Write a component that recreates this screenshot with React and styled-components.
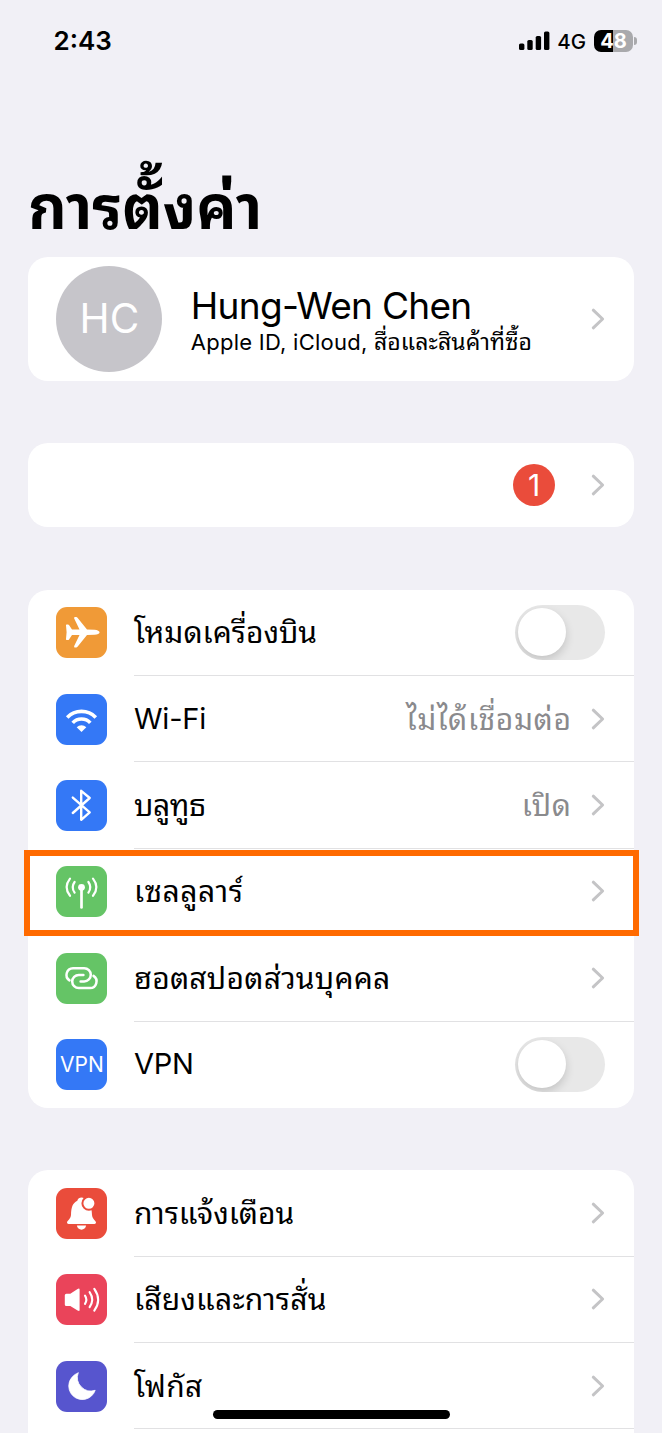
import React from "react";
import styled, { createGlobalStyle } from "styled-components";

const Global = createGlobalStyle`
  * { box-sizing: border-box; }
  body { margin: 0; background: #f1f0f6; }
`;

const sans = `Inter, "Noto Sans Thai Looped", Loma, "Noto Sans Thai", "Noto Sans", sans-serif`;

const Screen = styled.main`
  width: 662px;
  height: 1433px;
  position: relative;
  overflow: hidden;
  padding: 0 28.5px 0 28px;
  background: #f1f0f6;
  color: #000;
  font-family: ${sans};
  display: flex;
  flex-direction: column;
`;

const StatusBar = styled.header`
  flex: none;
  height: 81.5px;
  display: flex;
  align-items: center;
  justify-content: space-between;
  padding-left: 25.5px;
`;

const Clock = styled.span`
  padding-bottom: 1px;
  font-size: 26px;
  font-weight: 600;
`;

const StatusIcons = styled.div`
  display: flex;
  align-items: center;
  margin-right: -3px;
`;

const Network = styled.span`
  margin: 1px 8px 0 7px;
  font-size: 20.5px;
  font-weight: 500;
`;

const Battery = styled.div`
  width: 39px;
  height: 22px;
  border-radius: 7px;
  display: flex;
  align-items: center;
  justify-content: center;
  background: linear-gradient(90deg, #000 49%, #a9a9ac 49%);
  color: #fff;
  font-size: 20px;
  font-weight: 700;
`;

const BatteryCap = styled.div`
  width: 2.5px;
  height: 8px;
  margin-left: 1px;
  border-radius: 0 3px 3px 0;
  background: #a9a9ac;
`;

const Title = styled.h1`
  flex: none;
  height: 175.5px;
  margin: 0;
  padding-top: 85.5px;
  font-size: 60px;
  line-height: 80px;
  font-weight: 700;
  white-space: nowrap;
`;

const Card = styled.section`
  flex: none;
  margin-bottom: 62.3px;
  border-radius: 20px;
  background: #fff;
  ${(p) => p.$continues && "height: 330px;"}
`;

const Profile = styled.div`
  height: 123.7px;
  display: flex;
  align-items: center;
  padding: 0 28.5px 0 28.4px;
`;

const Avatar = styled.div`
  width: 106px;
  height: 106px;
  margin-right: 28.4px;
  border-radius: 50%;
  display: flex;
  align-items: center;
  justify-content: center;
  background: #c6c5ca;
  color: #fff;
  font-size: 40.5px;
`;

const Identity = styled.div`
  flex: 1;
  padding-top: 5px;
  white-space: nowrap;
`;

const Name = styled.div`
  font-size: 37px;
  line-height: 42px;
  letter-spacing: -0.7px;
`;

const Detail = styled.div`
  font-size: 22px;
  line-height: 30px;
  letter-spacing: 0.25px;
`;

const ThaiText = styled.span`
  font-size: 23px;
  letter-spacing: 0.1px;
`;

const Row = styled.div`
  height: 86.4px;
  position: relative;
  display: flex;
  align-items: center;
  padding-left: 28.4px;
`;

const RowBody = styled.div`
  flex: 1;
  align-self: stretch;
  margin-left: 26.6px;
  padding-right: 28.5px;
  display: flex;
  align-items: center;
  border-bottom: 1.5px solid ${(p) => (p.$divider ? "#e1e1e3" : "transparent")};
`;

const Label = styled.span`
  flex: 1;
  font-size: ${(p) => (p.$latin ? 29 : 30)}px;
  line-height: 50px;
  letter-spacing: ${(p) => p.$track || 0}px;
  white-space: nowrap;
`;

const Value = styled(Label)`
  flex: none;
  margin-right: 19.5px;
  letter-spacing: 0.6px;
  color: #8a8a8d;
`;

const Highlight = styled.div`
  position: absolute;
  z-index: 1;
  top: 1px;
  left: -4px;
  right: -5.5px;
  height: 86px;
  border: 6px solid #ff6a00;
`;

const Tile = styled.div`
  width: 51px;
  height: 51px;
  border-radius: 11px;
  display: flex;
  align-items: center;
  justify-content: center;
  background: ${(p) => p.$color};
  color: #fff;
  font-size: 21px;
`;

const Track = styled.div`
  width: 90px;
  height: 55px;
  padding: 3.5px 3px;
  border-radius: 28px;
  overflow: hidden;
  background: #e8e8e8;
`;

const Knob = styled.div`
  width: 48px;
  height: 48px;
  border-radius: 50%;
  background: #fff;
  box-shadow: 0 4px 10px rgba(0, 0, 0, 0.16);
`;

const NoticeRow = styled.div`
  height: 84.3px;
  display: flex;
  align-items: center;
  justify-content: flex-end;
  padding-right: 28.5px;
`;

const Count = styled.span`
  width: 42px;
  height: 42px;
  margin-right: 36px;
  border-radius: 50%;
  display: flex;
  align-items: center;
  justify-content: center;
  background: #ea4c3b;
  color: #fff;
  font-size: 30px;
`;

const HomeBar = styled.div`
  position: absolute;
  z-index: 2;
  left: 213px;
  bottom: 14px;
  width: 237px;
  height: 9px;
  border-radius: 5px;
  background: #000;
`;

const Glyph = ({ children }) => (
  <svg width="51" height="51" viewBox="0 0 51 51" fill="none" strokeLinecap="round" strokeLinejoin="round">
    {children}
  </svg>
);

const Chevron = () => (
  <svg width="14" height="24" viewBox="0 0 14 24" fill="none">
    <path d="M2.3 3.2 L11.6 12 L2.3 20.8" stroke="#c4c4c6" strokeWidth="3" strokeLinecap="round" strokeLinejoin="round" />
  </svg>
);

const Signal = () => (
  <svg width="31" height="20" viewBox="0 0 31 20" fill="#000">
    <rect x="0" y="12.5" width="5.4" height="6.5" rx="1.6" />
    <rect x="8.3" y="9" width="5.4" height="10" rx="1.6" />
    <rect x="16.7" y="5" width="5.4" height="14" rx="1.6" />
    <rect x="25" y="0.5" width="5.4" height="18.5" rx="1.6" />
  </svg>
);

const Toggle = () => (
  <Track>
    <Knob />
  </Track>
);

const glyphs = {
  plane: (
    <Glyph>
      <path
        fill="#fff"
        d="M10.6 17.5H12Q12.6 17.5 13 18L16 22.6H23.5L18.2 11.6Q17.6 10.1 19 10.1H20.2Q21 10.1 21.5 10.8L31 22.4L38.5 22.7C41.5 22.9 43.6 24 43.6 25.2S41.5 27.6 38.5 27.8L31 28.1L21.5 39.7Q21 40.4 20.2 40.4H19Q17.6 40.4 18.2 38.9L23.5 27.9H16L13 32.5Q12.6 33 12 33H10.6Q10 33 10 32.2L10.6 25.2L10 18.3Q10 17.5 10.6 17.5Z"
      />
    </Glyph>
  ),
  wifi: (
    <Glyph>
      <g stroke="#fff" strokeWidth="3.6" strokeLinecap="butt">
        <path d="M11.2 23.4A20 20 0 0 1 39.8 23.4" />
        <path d="M16.7 28.9A12 12 0 0 1 34.3 28.9" />
      </g>
      <path fill="#fff" d="M20.7 33.2A6.8 6.8 0 0 1 30.3 33.2L25.5 38Z" />
    </Glyph>
  ),
  bluetooth: (
    <Glyph>
      <path stroke="#fff" strokeWidth="2.4" d="M16.8 17.6L33.7 32.4L25.2 39.8V10.8L33.7 18L16.8 33" />
    </Glyph>
  ),
  cellular: (
    <Glyph>
      <circle cx="25.5" cy="21.3" r="3.4" fill="#fff" />
      <g stroke="#fff" strokeWidth="2.2">
        <path strokeWidth="2.7" d="M25.5 22V41.4" />
        <path d="M18.6 16Q14.8 21.3 18.6 26.7M32.4 16Q36.2 21.3 32.4 26.7" />
        <path d="M14 12.6Q7.2 21.3 14 29.8M37 12.6Q43.8 21.3 37 29.8" />
      </g>
    </Glyph>
  ),
  hotspot: (
    <Glyph>
      <g stroke="#fff" strokeWidth="2.5">
        <path d="M13.5 27.4A6.65 6.65 0 0 1 17 15.2H28.2A6.6 6.6 0 0 1 28.2 28.4H24.6" />
        <path d="M37.5 22.9A6.65 6.65 0 0 1 34 35.1H22.8A6.6 6.6 0 0 1 22.8 21.9H27.4" />
      </g>
    </Glyph>
  ),
  bell: (
    <Glyph>
      <path
        fill="#fff"
        d="M11 34.6C11 32.5 14.6 31.4 15 27C15.3 19 16.5 15.5 21.3 12.8C21.9 10.5 23.5 9.5 25.5 9.5S29.1 10.5 29.7 12.8C34.5 15.5 35.7 19 36 27C36.4 31.4 40 32.5 40 34.6Q40 36 38.5 36H12.5Q11 36 11 34.6Z"
      />
      <path fill="#fff" d="M20.9 37.6H30.1C29.6 43 21.4 43 20.9 37.6Z" />
      <circle cx="32.9" cy="15.3" r="6.5" fill="#fff" stroke="#ea4c3b" strokeWidth="2" />
    </Glyph>
  ),
  sound: (
    <Glyph>
      <path fill="#fff" d="M10.4 19.7H14.3L21.6 14.9Q23.6 13.8 23.6 15.6V35.9Q23.6 37.7 21.6 36.5L14.3 32H10.4Q8.8 32 8.8 30.4V21.3Q8.8 19.7 10.4 19.7Z" />
      <g stroke="#fff" strokeWidth="2.1">
        <path d="M29 21.7Q31.7 25.7 29 29.8" />
        <path d="M33.6 18.2Q38.8 25.7 33.6 33.2" />
        <path d="M38.3 14.8Q46 25.7 38.3 36.6" />
      </g>
    </Glyph>
  ),
  moon: (
    <Glyph>
      <path
        fill="#fff"
        stroke="#fff"
        strokeWidth="0.8"
        d="M22.1 12A13.6 13.6 0 1 0 39.2 29.3A13.6 13.6 0 0 1 22.1 12Z"
      />
    </Glyph>
  ),
  vpn: "VPN",
};

const connectivity = [
  { icon: "plane", color: "#f09a37", label: "โหมดเครื่องบิน", toggle: true },
  { icon: "wifi", color: "#3478f6", label: "Wi-Fi", latin: true, track: -0.2, value: "ไม่ได้เชื่อมต่อ" },
  { icon: "bluetooth", color: "#3478f6", label: "บลูทูธ", track: -0.4, value: "เปิด" },
  { icon: "cellular", color: "#65c466", label: "เซลลูลาร์", track: 0.6, highlighted: true },
  { icon: "hotspot", color: "#65c466", label: "ฮอตสปอตส่วนบุคคล", track: 0.25 },
  { icon: "vpn", color: "#3478f6", label: "VPN", latin: true, track: -0.2, toggle: true, last: true },
];

const alerts = [
  { icon: "bell", color: "#ea4c3b", label: "การแจ้งเตือน" },
  { icon: "sound", color: "#ea445a", label: "เสียงและการสั่น", track: 0.2 },
  { icon: "moon", color: "#5755ce", label: "โฟกัส", track: 0.3 },
];

const SettingRow = ({ icon, color, label, latin, track, value, toggle, highlighted, last }) => (
  <Row>
    <Tile $color={color}>{glyphs[icon]}</Tile>
    <RowBody $divider={!last && !highlighted}>
      <Label $latin={latin} $track={track}>{label}</Label>
      {value && <Value>{value}</Value>}
      {toggle ? <Toggle /> : <Chevron />}
    </RowBody>
    {highlighted && <Highlight />}
  </Row>
);

export default function App() {
  return (
    <>
      <Global />
      <Screen>
        <StatusBar>
          <Clock>2:43</Clock>
          <StatusIcons>
            <Signal />
            <Network>4G</Network>
            <Battery>48</Battery>
            <BatteryCap />
          </StatusIcons>
        </StatusBar>
        <Title>การตั้งค่า</Title>
        <Card>
          <Profile>
            <Avatar>HC</Avatar>
            <Identity>
              <Name>Hung-Wen Chen</Name>
              <Detail>
                Apple ID, iCloud, <ThaiText>สื่อและสินค้าที่ซื้อ</ThaiText>
              </Detail>
            </Identity>
            <Chevron />
          </Profile>
        </Card>
        <Card>
          <NoticeRow>
            <Count>1</Count>
            <Chevron />
          </NoticeRow>
        </Card>
        <Card>
          {connectivity.map((r) => (
            <SettingRow key={r.icon} {...r} />
          ))}
        </Card>
        <Card $continues>
          {alerts.map((r) => (
            <SettingRow key={r.icon} {...r} />
          ))}
        </Card>
        <HomeBar />
      </Screen>
    </>
  );
}
